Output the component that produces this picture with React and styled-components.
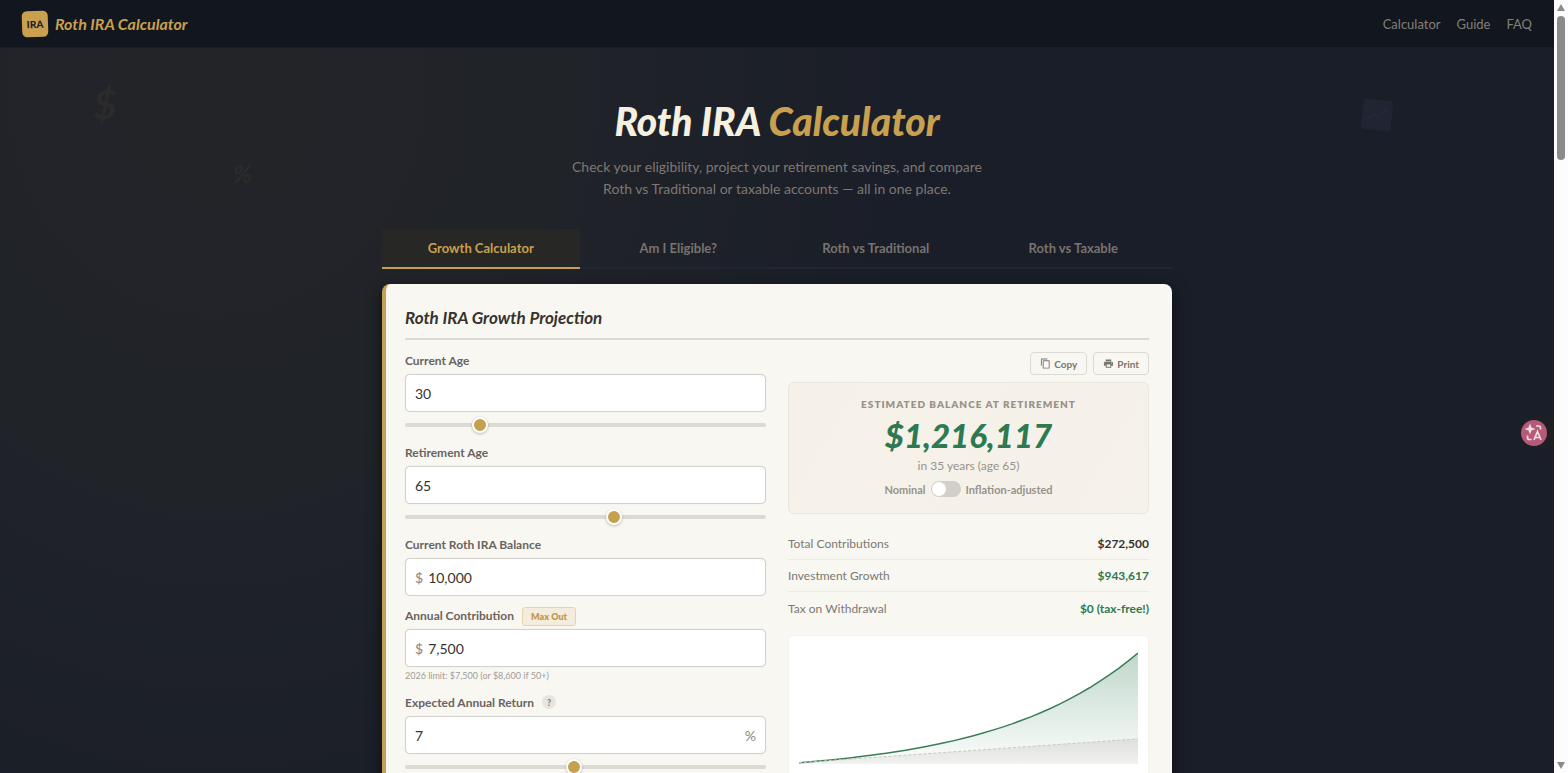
import React, { useState } from 'react'
import styled, { createGlobalStyle, css } from 'styled-components'
import { MdContentCopy, MdPrint } from 'react-icons/md'

const GlobalStyle = createGlobalStyle`
  * {
    box-sizing: border-box;
  }

  body {
    margin: 0;
    background: #1a1e28;
    color: #3d3a36;
    font-family: Lato, 'Noto Sans', sans-serif;
    font-size: 14px;
  }

  button,
  input {
    font-family: inherit;
  }
`

const script = css`
  font-family: Lato, 'Noto Sans', sans-serif;
  font-style: italic;
`

const Window = styled.div`
  display: flex;
  height: 100vh;
  overflow: hidden;
`

const Page = styled.div`
  position: relative;
  flex: 1;
  min-width: 0;
  overflow: hidden;
  background: radial-gradient(
      ellipse 45% 105% at 14% 10%,
      rgba(200, 150, 50, 0.05),
      rgba(180, 160, 40, 0.04) 50%,
      transparent
    ),
    #1a1e28;
`

const Scrollbar = styled.div`
  display: flex;
  flex-direction: column;
  align-items: center;
  justify-content: space-between;
  width: 14px;
  padding: 4px 0;
  background: #fcfcfc;
`

const Thumb = styled.div`
  width: 8px;
  height: 144px;
  margin: 5px 0 auto;
  border-radius: 4px;
  background: #8b8b8b;
`

const Nav = styled.nav`
  display: flex;
  align-items: center;
  justify-content: space-between;
  height: 48px;
  padding: 0 22px;
  background: #12161e;
  border-bottom: 1px solid #1a1e26;
`

const Brand = styled.a`
  ${script}
  display: flex;
  align-items: center;
  gap: 7px;
  color: #c9a04f;
  font-size: 16px;
  font-weight: 700;
  text-decoration: none;
`

const Logo = styled.span`
  display: flex;
  align-items: center;
  justify-content: center;
  width: 26px;
  height: 26px;
  border-radius: 5px;
  background: #c9a04f;
  color: #1f2023;
  font-size: 10px;
  font-style: normal;
  font-weight: 900;
  transform: rotate(-2deg);
`

const NavLinks = styled.div`
  display: flex;
  gap: 16px;
`

const NavLink = styled.a`
  color: #847f79;
  font-size: 13px;
  text-decoration: none;
`

const Hero = styled.header`
  padding: 48px 16px 0;
  text-align: center;
`

const Title = styled.h1`
  ${script}
  margin: 0;
  color: #f5f0e0;
  font-size: 39px;
  font-weight: 900;
  line-height: 50px;
`

const Accent = styled.span`
  color: #c9a04f;
`

const Intro = styled.p`
  max-width: 440px;
  margin: 10px auto 0;
  color: #7c7873;
  font-size: 14px;
  line-height: 22px;
`

const Floating = styled.span`
  ${script}
  position: absolute;
  left: ${(p) => p.$x}%;
  top: ${(p) => p.$y}px;
  color: #2c2b2b;
  font-size: ${(p) => p.$size}px;
  font-weight: 700;
  line-height: 1;
  transform: rotate(${(p) => p.$turn}deg);
`

const Content = styled.main`
  max-width: 822px;
  margin: 0 auto;
  padding: 29px 16px 0;
`

const Tabs = styled.div`
  display: grid;
  grid-template-columns: repeat(4, 1fr);
  border-bottom: 2px solid #222633;
`

const Tab = styled.button`
  height: 40px;
  margin-bottom: -2px;
  padding: 0;
  border: 0;
  border-bottom: 2px solid ${(p) => (p.$active ? '#c9a04f' : 'transparent')};
  background: ${(p) => (p.$active ? '#272725' : 'transparent')};
  color: ${(p) => (p.$active ? '#c9a04f' : '#77736f')};
  font-size: 13px;
  font-weight: 700;
  cursor: pointer;
`

const Card = styled.section`
  margin-top: 15px;
  padding: 18px 23px 24px 19px;
  border-left: 4px solid #c4a055;
  border-radius: 8px;
  background: #f9f7f2;
  box-shadow: 0 4px 16px rgba(0, 0, 0, 0.5);
`

const CardTitle = styled.h2`
  ${script}
  margin: 0 0 12px;
  padding-bottom: 4px;
  border-bottom: 2px solid #dcdad4;
  color: #35332f;
  font-size: 17px;
  font-weight: 700;
  line-height: 32px;
`

const Columns = styled.div`
  display: grid;
  grid-template-columns: 1fr 1fr;
  gap: 22px;
`

const Field = styled.div`
  margin-bottom: ${(p) => p.$gap}px;
`

const LabelRow = styled.div`
  display: flex;
  align-items: center;
  gap: 8px;
  height: 16px;
  margin-bottom: 6px;
`

const Label = styled.label`
  color: #68645f;
  font-size: 12px;
  font-weight: 700;
`

const InputBox = styled.div`
  display: flex;
  align-items: center;
  height: 38px;
  padding: 0 9px;
  gap: 5px;
  border: 1px solid #d3d1cc;
  border-radius: 5px;
  background: #fff;
  box-shadow: 0 0 1px #d3d1cc;
`

const Input = styled.input`
  flex: 1;
  min-width: 0;
  padding: 0;
  border: 0;
  outline: 0;
  background: transparent;
  color: #35332f;
  font-size: 14px;
`

const Affix = styled.span`
  color: #918d86;
  font-size: 14px;
  font-weight: 500;
`

const Slider = styled.input`
  display: block;
  width: 100%;
  height: 4px;
  margin: 11px 0 0;
  border-radius: 2px;
  background: #dcdad3;
  appearance: none;

  &::-webkit-slider-thumb {
    width: 16px;
    height: 16px;
    border: 2px solid #fff;
    border-radius: 50%;
    background: #c4a04f;
    box-shadow: 0 1px 3px rgba(0, 0, 0, 0.25);
    appearance: none;
  }
`

const MaxOut = styled.button`
  height: 19px;
  margin-top: 2px;
  padding: 0 8px;
  border: 1px solid #e6d4b0;
  border-radius: 3px;
  background: #f4eddd;
  color: #c4994f;
  font-size: 9px;
  font-weight: 800;
`

const Help = styled.button`
  width: 14px;
  height: 14px;
  padding: 0;
  border: 0;
  border-radius: 50%;
  background: #e8e5df;
  color: #8f8a82;
  font-size: 9px;
  font-weight: 800;
`

const Hint = styled.p`
  margin: 2px 0 0;
  color: #a19d96;
  font-size: 9px;
  line-height: 14px;
`

const Actions = styled.div`
  display: flex;
  justify-content: flex-end;
  gap: 6px;
  margin-bottom: 7px;
`

const ActionButton = styled.button`
  display: flex;
  align-items: center;
  gap: 3px;
  height: 23px;
  padding: 0 9px;
  border: 1px solid #dcdad4;
  border-radius: 4px;
  background: transparent;
  color: #7a756e;
  font-size: 10px;
  font-weight: 700;
`

const Result = styled.div`
  display: flex;
  flex-direction: column;
  align-items: center;
  height: 132px;
  padding-top: 13px;
  border: 1px solid #ebe7dc;
  border-radius: 6px;
  background: linear-gradient(120deg, #f6f1e8, #f5f1eb);
`

const ResultLabel = styled.div`
  color: #97938a;
  font-size: 10px;
  font-weight: 800;
  letter-spacing: 1px;
  line-height: 16px;
  text-transform: uppercase;
`

const Amount = styled.output`
  ${script}
  color: #2d7a50;
  font-size: 33px;
  font-weight: 900;
  line-height: 46px;
`

const Years = styled.div`
  color: #97938a;
  font-size: 12px;
  line-height: 16px;
`

const Toggle = styled.label`
  display: flex;
  align-items: center;
  gap: 5px;
  margin-top: 7px;
  color: #97938a;
  font-size: 11px;
  font-weight: 700;
`

const Switch = styled.input`
  display: flex;
  align-items: center;
  width: 30px;
  height: 16px;
  margin: 0;
  padding: 0 1px;
  border-radius: 8px;
  background: #d2cec9;
  appearance: none;

  &::before {
    width: 14px;
    height: 14px;
    border-radius: 50%;
    background: #fff;
    content: '';
  }

  &:checked {
    justify-content: flex-end;
    background: #2d7a50;
  }
`

const Stats = styled.dl`
  margin: 14px 0 11px;
`

const Stat = styled.div`
  display: flex;
  align-items: center;
  justify-content: space-between;
  height: 32px;
  border-bottom: 1px solid #eceae5;

  &:last-child {
    border-bottom: 0;
  }
`

const StatName = styled.dt`
  color: #7d7871;
  font-size: 12px;
`

const StatValue = styled.dd`
  margin: 0;
  color: ${(p) => (p.$green ? '#2d7a50' : '#35332f')};
  font-size: 12px;
  font-weight: 700;
`

const ChartBox = styled.div`
  padding: 8px 10px;
  border: 1px solid #f4f2ed;
  border-radius: 5px;
  background: #fff;

  svg {
    display: block;
    width: 100%;
  }
`

const Translate = styled.button`
  position: absolute;
  top: 416px;
  right: 0;
  display: flex;
  align-items: center;
  width: 34px;
  height: 34px;
  padding: 0 0 0 1px;
  border: 0;
  border-radius: 17px 0 0 17px;
  background: #1e1f24;
`

const CHART_W = 340
const BASE = 120
const YEARS = 35

// contributions land at the start of each year
const project = (balance, yearly, rate) => {
  const rows = [{ total: balance, paid: balance }]
  for (let i = 1; i <= YEARS; i++) {
    const prev = rows[i - 1]
    rows.push({
      total: (prev.total + yearly) * (1 + rate),
      paid: prev.paid + yearly,
    })
  }
  return rows
}

function GrowthChart() {
  const rows = project(10000, 7500, 0.07)
  const max = rows[YEARS].total
  const toPath = (key) =>
    rows
      .map((row, i) => {
        const x = (i / YEARS) * CHART_W
        const y = BASE - (row[key] / max) * 111
        return `${i ? 'L' : 'M'}${x.toFixed(1)} ${y.toFixed(1)}`
      })
      .join(' ')
  const close = ` L${CHART_W} ${BASE} L0 ${BASE} Z`

  return (
    <ChartBox>
      <svg viewBox={`0 0 ${CHART_W} 150`} role="img" aria-label="Growth chart">
        <defs>
          <linearGradient id="growth" x1="0" y1="0" x2="0" y2="1">
            <stop offset="0" stopColor="#2d7a50" stopOpacity="0.3" />
            <stop offset="1" stopColor="#2d7a50" stopOpacity="0.02" />
          </linearGradient>
          <linearGradient id="paid" x1="0" y1="0" x2="0" y2="1">
            <stop offset="0" stopColor="#a8a29a" stopOpacity="0.25" />
            <stop offset="1" stopColor="#a8a29a" stopOpacity="0.12" />
          </linearGradient>
        </defs>
        <path d={toPath('total') + close} fill="url(#growth)" />
        <path d={toPath('paid') + close} fill="url(#paid)" />
        <path d={toPath('total')} fill="none" stroke="#3b7d5a" strokeWidth="1.5" />
        <path
          d={toPath('paid')}
          fill="none"
          stroke="#cbc7c1"
          strokeWidth="1"
          strokeDasharray="3 2"
        />
      </svg>
    </ChartBox>
  )
}

const tabs = [
  'Growth Calculator',
  'Am I Eligible?',
  'Roth vs Traditional',
  'Roth vs Taxable',
]

const stats = [
  { name: 'Total Contributions', value: '$272,500' },
  { name: 'Investment Growth', value: '$943,617', green: true },
  { name: 'Tax on Withdrawal', value: '$0 (tax-free!)', green: true },
]

function NumberField({ id, label, initial, prefix, suffix, range, extra, hint, gap }) {
  const [value, setValue] = useState(initial)
  const onChange = (e) => setValue(e.target.value)

  return (
    <Field $gap={gap}>
      <LabelRow>
        <Label htmlFor={id}>{label}</Label>
        {extra}
      </LabelRow>
      <InputBox>
        {prefix && <Affix>{prefix}</Affix>}
        <Input id={id} type="text" value={value} onChange={onChange} />
        {suffix && <Affix>{suffix}</Affix>}
      </InputBox>
      {range && (
        <Slider
          type="range"
          aria-label={label}
          min={range[0]}
          max={range[1]}
          value={value}
          onChange={onChange}
        />
      )}
      {hint && <Hint>{hint}</Hint>}
    </Field>
  )
}

function App() {
  const [active, setActive] = useState(tabs[0])

  return (
    <Window>
      <GlobalStyle />
      <Page>
        <Nav>
          <Brand href="#">
            <Logo>IRA</Logo>
            Roth IRA Calculator
          </Brand>
          <NavLinks>
            <NavLink href="#calculator">Calculator</NavLink>
            <NavLink href="#guide">Guide</NavLink>
            <NavLink href="#faq">FAQ</NavLink>
          </NavLinks>
        </Nav>

        <Floating $x={6} $y={84} $size={40} $turn={0}>
          $
        </Floating>
        <Floating $x={15} $y={161} $size={25} $turn={0}>
          %
        </Floating>
        <Floating $x={87.6} $y={99} $size={32} $turn={6}>
          <svg width="32" height="32" viewBox="0 0 32 32" display="block">
            <rect x="1" y="1" width="30" height="30" rx="3" fill="#212533" />
            <path d="M6 22l7-7 4 4 9-10" fill="none" stroke="#262834" strokeWidth="2" />
          </svg>
        </Floating>

        <Hero>
          <Title>
            Roth IRA <Accent>Calculator</Accent>
          </Title>
          <Intro>
            Check your eligibility, project your retirement savings, and compare
            Roth vs Traditional or taxable accounts — all in one place.
          </Intro>
        </Hero>

        <Content>
          <Tabs role="tablist">
            {tabs.map((tab) => (
              <Tab
                key={tab}
                role="tab"
                aria-selected={tab === active}
                $active={tab === active}
                onClick={() => setActive(tab)}
              >
                {tab}
              </Tab>
            ))}
          </Tabs>

          <Card>
            <CardTitle>Roth IRA Growth Projection</CardTitle>
            <Columns>
              <div>
                <NumberField
                  id="age"
                  label="Current Age"
                  initial="30"
                  range={[18, 80]}
                  gap={17}
                />
                <NumberField
                  id="retire"
                  label="Retirement Age"
                  initial="65"
                  range={[30, 90]}
                  gap={17}
                />
                <NumberField
                  id="balance"
                  label="Current Roth IRA Balance"
                  initial="10,000"
                  prefix="$"
                  gap={11}
                />
                <NumberField
                  id="contribution"
                  label="Annual Contribution"
                  initial="7,500"
                  prefix="$"
                  extra={<MaxOut>Max Out</MaxOut>}
                  hint="2026 limit: $7,500 (or $8,600 if 50+)"
                  gap={11}
                />
                <NumberField
                  id="return"
                  label="Expected Annual Return"
                  initial="7"
                  suffix="%"
                  extra={<Help aria-label="About annual return">?</Help>}
                  range={[0, 15]}
                  gap={17}
                />
              </div>

              <div>
                <Actions>
                  <ActionButton>
                    <MdContentCopy size={11} />
                    Copy
                  </ActionButton>
                  <ActionButton>
                    <MdPrint size={11} />
                    Print
                  </ActionButton>
                </Actions>
                <Result>
                  <ResultLabel>Estimated balance at retirement</ResultLabel>
                  <Amount>$1,216,117</Amount>
                  <Years>in 35 years (age 65)</Years>
                  <Toggle>
                    Nominal
                    <Switch type="checkbox" />
                    Inflation-adjusted
                  </Toggle>
                </Result>
                <Stats>
                  {stats.map((stat) => (
                    <Stat key={stat.name}>
                      <StatName>{stat.name}</StatName>
                      <StatValue $green={stat.green}>{stat.value}</StatValue>
                    </Stat>
                  ))}
                </Stats>
                <GrowthChart />
              </div>
            </Columns>
          </Card>
        </Content>

        <Translate aria-label="Translate">
          <svg width="26" height="26" viewBox="0 0 26 26">
            <circle cx="13" cy="13" r="13" fill="#b75a78" />
            <path d="M9 3.500l1.500 4 4 1.500-4 1.500L9 14.500l-1.500-4L3.500 9l4-1.500z" fill="#eddde3" />
            <path
              d="M15 6h2.500a2 2 0 0 1 2 2v1.500M6.500 15.500v2a2 2 0 0 0 2 2h2M13 20l3.500-8.500L20 20M14 17.500h5"
              fill="none"
              stroke="#eddde3"
              strokeWidth="1.700"
            />
          </svg>
        </Translate>
      </Page>
      <Scrollbar>
        <svg width="8" height="7" viewBox="0 0 8 7">
          <path d="M4 0l4 7H0z" fill="#8b8b8b" />
        </svg>
        <Thumb />
        <svg width="8" height="7" viewBox="0 0 8 7">
          <path d="M0 0h8L4 7z" fill="#8b8b8b" />
        </svg>
      </Scrollbar>
    </Window>
  )
}

export default App
